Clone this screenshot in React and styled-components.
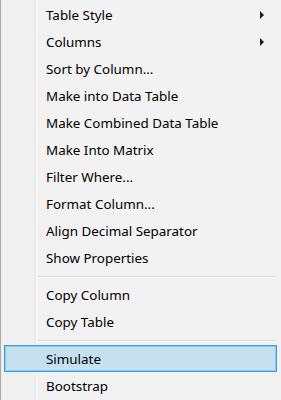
import React from 'react'
import styled, { createGlobalStyle } from 'styled-components'

const Global = createGlobalStyle`
  html, body {
    margin: 0;
    padding: 0;
    background: #f2f2f2;
  }
`

const items = [
  { label: 'Table Style', sub: true },
  { label: 'Columns', sub: true },
  { label: 'Sort by Column...' },
  { label: 'Make into Data Table' },
  { label: 'Make Combined Data Table' },
  { label: 'Make Into Matrix' },
  { label: 'Filter Where...' },
  { label: 'Format Column...' },
  { label: 'Align Decimal Separator' },
  { label: 'Show Properties' },
  { sep: true },
  { label: 'Copy Column' },
  { label: 'Copy Table' },
  { sep: true },
  { label: 'Simulate', active: true },
  { label: 'Bootstrap' },
]

export default function App() {
  return (
    <>
      <Global />
      <Menu>
        {items.map((item, i) => {
          if (item.sep) return <Separator key={i} />
          return (
            <Item key={i} $active={item.active}>
              <Label>{item.label}</Label>
              {item.sub && <Arrow />}
            </Item>
          )
        })}
      </Menu>
    </>
  )
}

const Menu = styled.div`
  position: relative;
  width: 281px;
  height: 400px;
  box-sizing: border-box;
  padding: 1px 4px 0 4px;
  overflow: hidden;
  font-family: 'Noto Sans', 'Open Sans', sans-serif;
  font-size: 13.4px;
  color: #000;
  background:
    linear-gradient(to right, #a9a9a9 0 1px, #f0f0f0 1px 35px, #e2e2e2 35px 36px, #ffffff 36px 37px, #f2f2f2 37px);
`

const Item = styled.div`
  position: relative;
  display: flex;
  align-items: center;
  height: 27px;
  box-sizing: border-box;
  padding-left: 41px;
  padding-right: 8px;
  border: 1px solid ${(p) => (p.$active ? '#3a9fdd' : 'transparent')};
  background: ${(p) => (p.$active ? '#c5e1f0' : 'transparent')};
  box-shadow: ${(p) => (p.$active ? 'inset 0 0 0 1px #8ec8eb' : 'none')};
`

const Label = styled.span`
  flex: 1;
  white-space: nowrap;
`

const Arrow = styled.span`
  width: 0;
  height: 0;
  border-top: 4px solid transparent;
  border-bottom: 4px solid transparent;
  border-left: 4px solid #1a1a1a;
  margin-right: 4px;
`

const Separator = styled.div`
  height: 10px;
  margin-left: 34px;
  margin-right: 1px;
  display: flex;
  align-items: center;
  &::after {
    content: '';
    display: block;
    width: 100%;
    height: 1px;
    background: #d8d8d8;
    box-shadow: 0 1px 0 #ffffff;
  }
`
